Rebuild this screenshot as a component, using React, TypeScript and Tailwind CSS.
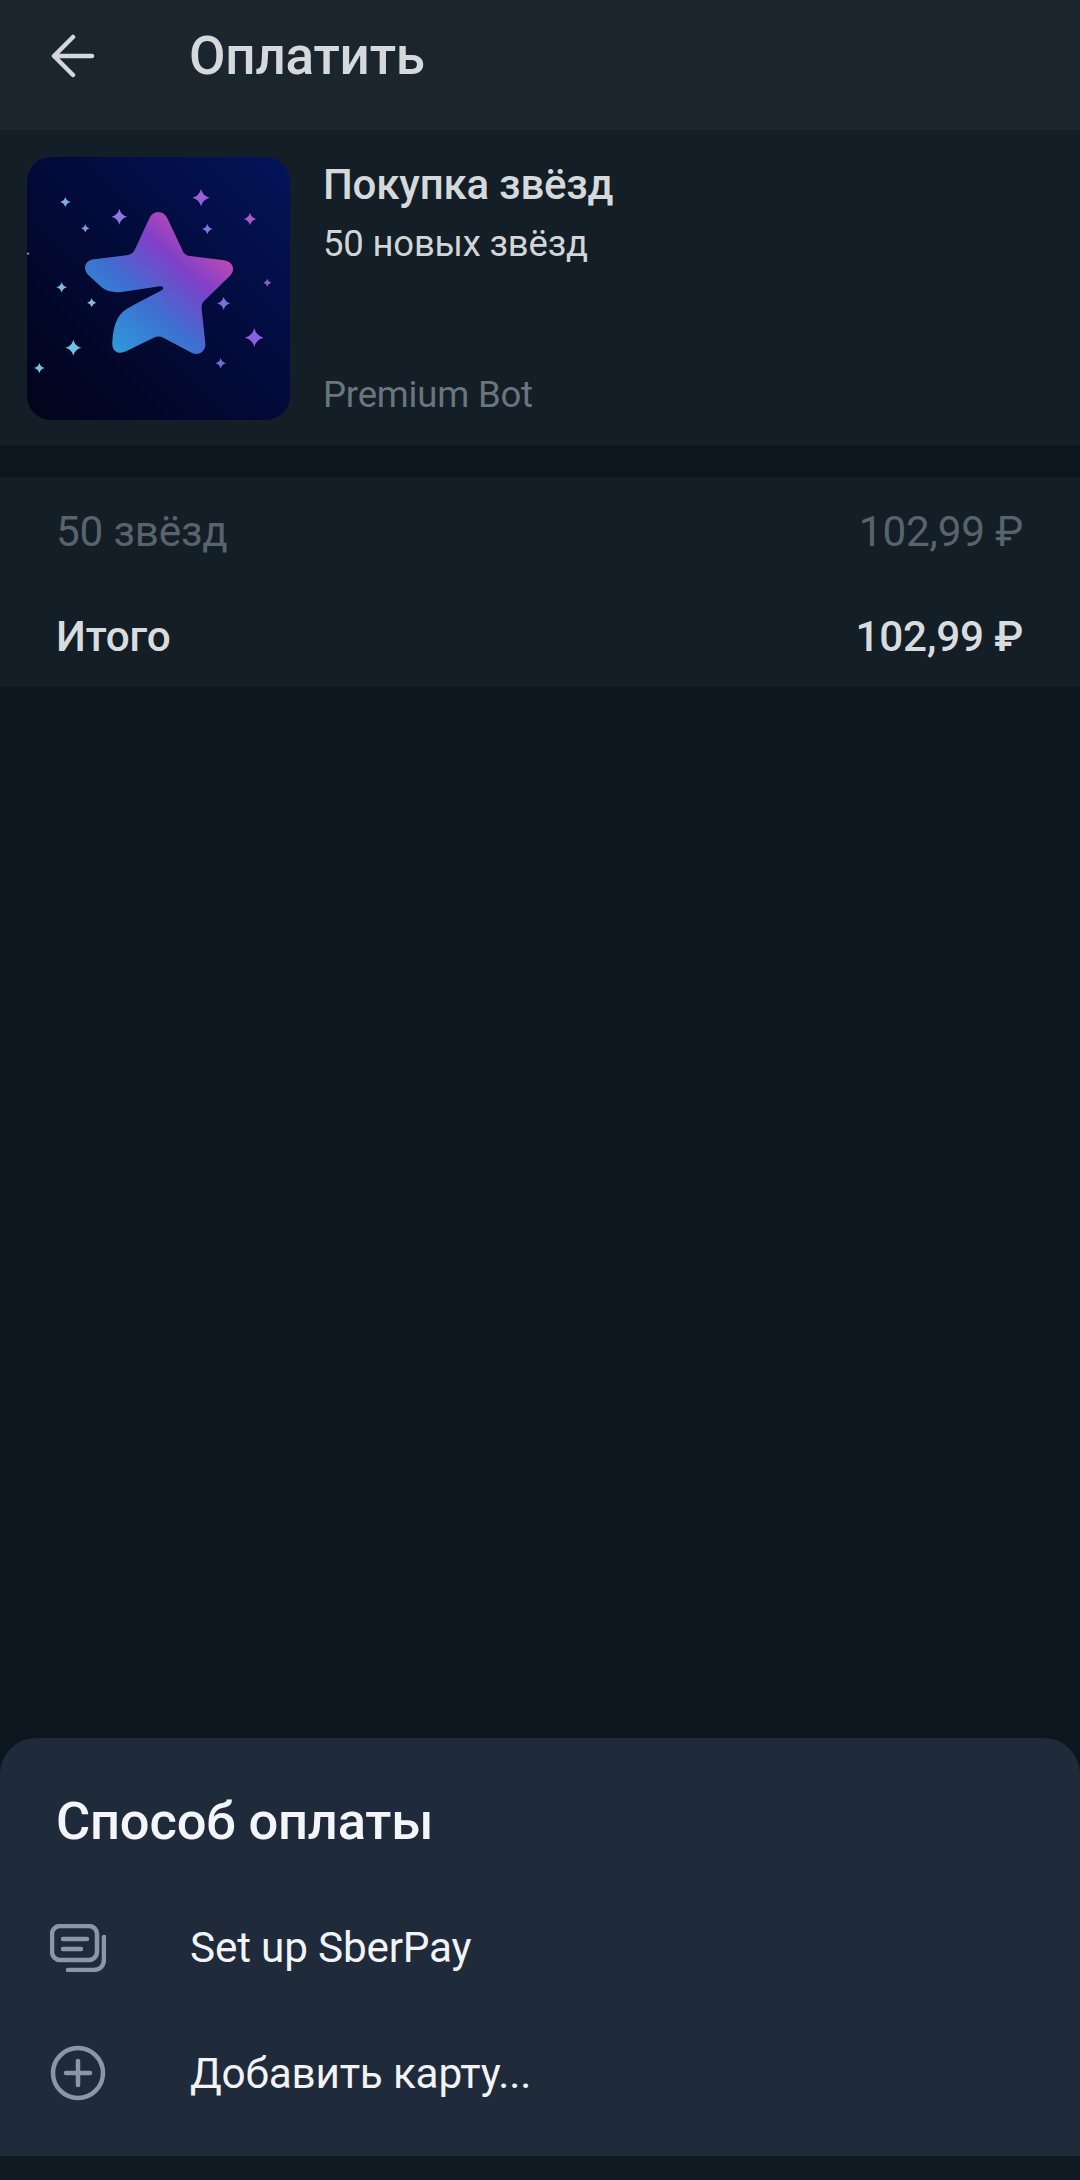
const sparkles: [number, number, number, string][] = [
  [136, 156, 16, "#7fa8e0"],
  [298, 200, 24, "#8a78e0"],
  [196, 235, 12, "#7f9ee0"],
  [543, 143, 26, "#9a5fd8"],
  [690, 207, 19, "#a95cc8"],
  [562, 237, 16, "#7f78dc"],
  [125, 412, 16, "#7fb8e0"],
  [215, 458, 14, "#7fbce0"],
  [742, 398, 12, "#8a5cc8"],
  [611, 460, 20, "#7a70dc"],
  [703, 563, 28, "#8a60dc"],
  [160, 593, 24, "#70c0e8"],
  [58, 654, 16, "#70c4e0"],
  [602, 640, 16, "#7a68d8"],
  [24, 311, 5, "#80a8c8"],
];

function Sparkle({ x, y, r, c }: { x: number; y: number; r: number; c: string }) {
  const k = r * 0.2;
  return (
    <path
      d={`M${x} ${y - r}Q${x + k} ${y - k} ${x + r} ${y}Q${x + k} ${y + k} ${x} ${y + r}Q${x - k} ${y + k} ${x - r} ${y}Q${x - k} ${y - k} ${x} ${y - r}Z`}
      fill={c}
    />
  );
}

function StarArt() {
  return (
    <svg viewBox="21 21 789 789" className="h-[263px] w-[263px] shrink-0 rounded-[24px]">
      <defs>
        <linearGradient id="bg" x1="1" y1="0" x2="0" y2="1">
          <stop offset="0" stopColor="#03145a" />
          <stop offset="0.5" stopColor="#020a38" />
          <stop offset="1" stopColor="#02041a" />
        </linearGradient>
        <linearGradient id="st" gradientUnits="userSpaceOnUse" x1="290" y1="610" x2="590" y2="270">
          <stop offset="0" stopColor="#2f9ad8" />
          <stop offset="0.38" stopColor="#3c70d0" />
          <stop offset="0.72" stopColor="#8040c8" />
          <stop offset="1" stopColor="#c84cb0" />
        </linearGradient>
      </defs>
      <rect x="21" y="21" width="789" height="789" fill="url(#bg)" />
      {sparkles.map(([x, y, r, c], i) => (
        <Sparkle key={i} x={x} y={y} r={r} c={c} />
      ))}
      <path
        d="M388 205C400 180 430 180 442 205L487 300C491 311 497 316 510 318L612 331C638 335 648 358 630 377L553 452C546 459 544 466 545 476L556 580C558 606 534 620 512 607L430 563C420 558 411 558 401 563L318 604C296 615 274 604 277 575C280 530 290 495 320 477C345 462 395 438 425 421C432 416 431 408 420 409L310 425C285 429 262 426 245 412L205 375C186 355 196 331 222 328L320 316C333 314 340 309 345 298Z"
        fill="url(#st)"
      />
    </svg>
  );
}

export default function App() {
  return (
    <div className="flex h-[2180px] w-[1080px] flex-col overflow-hidden bg-[#0d161e] font-['Roboto',sans-serif]">
      <header className="flex h-[130px] items-center bg-[#1a252e] pb-[18px]">
        <svg viewBox="0 0 44 44" className="ml-[51px] h-[44px] w-[44px]" fill="none" stroke="#d5d8da" strokeWidth="4.5" strokeLinecap="round" strokeLinejoin="round">
          <path d="M3 22H41M22 3L3 22L22 41" />
        </svg>
        <h1 className="ml-[94px] text-[53px] font-medium leading-none tracking-[-0.2px] text-[#d6d9db]">Оплатить</h1>
      </header>

      <section className="flex h-[315px] gap-[33px] bg-[#131e26] pl-[27px] pt-[27px]">
        <StarArt />
        <div className="flex h-[263px] flex-col">
          <div className="mt-[4px] text-[42px] font-medium leading-[48px] tracking-[-0.2px] text-[#d6d9db]">Покупка звёзд</div>
          <div className="mt-[14px] text-[36.5px] leading-[42px] tracking-[-0.2px] text-[#d2d5d8]">50 новых звёзд</div>
          <div className="mt-auto mb-[4px] text-[36.5px] leading-[42px] tracking-[-0.2px] text-[#6b757c]">Premium Bot</div>
        </div>
      </section>

      <section className="mt-[32px] flex h-[210px] flex-col bg-[#131e26] pl-[56px] pr-[57px] pt-[33px] text-[42.3px] leading-[44px]">
        <div className="flex justify-between tracking-[-0.2px] text-[#59636b]">
          <span>50 звёзд</span>
          <span>102,99 ₽</span>
        </div>
        <div className="mt-[61px] flex justify-between font-medium tracking-[-0.2px] text-[#d9dcde]">
          <span>Итого</span>
          <span>102,99 ₽</span>
        </div>
      </section>

      <div className="flex-1" />

      <section className="flex h-[418px] flex-col rounded-t-[36px] bg-[#1f2a3a]">
        <h2 className="ml-[56px] mt-[55px] text-[52.5px] font-medium leading-[56px] tracking-[-0.2px] text-[#f3f5f8]">Способ оплаты</h2>
        <div className="mt-[68px] flex h-[62px] items-center">
          <svg viewBox="0 0 56 48" className="ml-[50px] h-[48px] w-[56px]" fill="none" stroke="#8a97a8" strokeWidth="4.5" strokeLinecap="round" strokeLinejoin="round">
            <rect x="2" y="2" width="45" height="34" rx="8" />
            <path d="M13 15H37M13 25H31" />
            <path d="M54 13V35C54 42 50 46 43 46H18" />
          </svg>
          <span className="ml-[84px] text-[42.3px] tracking-[-0.2px] text-[#f1f3f6]">Set up SberPay</span>
        </div>
        <div className="mt-[64px] flex h-[62px] items-center">
          <svg viewBox="0 0 56 56" className="ml-[50px] h-[56px] w-[56px] -translate-y-[1px]" fill="none" stroke="#8a97a8" strokeWidth="4.5" strokeLinecap="round">
            <circle cx="28" cy="28" r="25" />
            <path d="M28 16V40M16 28H40" />
          </svg>
          <span className="ml-[84px] text-[42.3px] tracking-[-0.2px] text-[#f1f3f6]">Добавить карту...</span>
        </div>
      </section>

      <div className="h-[24px] bg-[#101a22]" />
    </div>
  );
}
